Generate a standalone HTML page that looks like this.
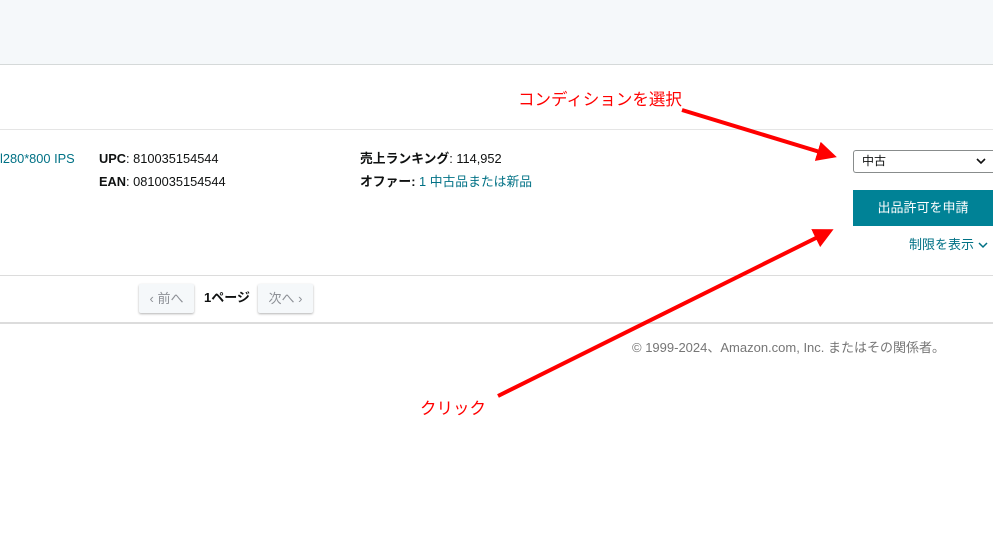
<!DOCTYPE html>
<html><head><meta charset="utf-8"><style>
body{margin:0;width:993px;height:541px;position:relative;overflow:hidden;background:#fff;font-family:"Liberation Sans","Noto Sans CJK JP",sans-serif;font-size:12.8px;color:#0f1111}
.a{position:absolute;white-space:nowrap;line-height:16px}
.top{position:absolute;left:0;top:0;width:993px;height:64px;background:#f5f8fa;border-bottom:1px solid #d5d9d9}
.line{position:absolute;left:0;width:993px;height:1px;background:#dcdcdc}
.lnk{color:#007185}
b{font-weight:700}
.pb{position:absolute;top:284px;height:29px;background:#f5f8fa;border-radius:2px;box-shadow:0 1px 2px rgba(0,0,0,.3);color:#8d9096;font-size:13px;line-height:29px;text-align:center}
.red{color:#f00;font-size:16.5px;font-family:"Noto Sans CJK JP",sans-serif;line-height:22px}
</style></head><body>
<div class="top"></div>
<div class="line" style="top:129px;background:#e5e5e5"></div>
<div class="line" style="top:275px"></div>
<div class="line" style="top:322px;height:2px"></div>
<div class="a lnk" style="left:0;top:151px">l280*800 IPS</div>
<div class="a" style="left:99px;top:151px"><b>UPC</b>: 810035154544</div>
<div class="a" style="left:99px;top:174px"><b>EAN</b>: 0810035154544</div>
<div class="a" style="left:360px;top:151px"><b>売上ランキング</b>: 114,952</div>
<div class="a" style="left:360px;top:174px"><b>オファー:</b> <span class="lnk">1 中古品または新品</span></div>
<div class="a" style="left:853px;top:150px;width:140px;height:23px;border:1px solid #888c8c;border-right:none;border-radius:3px 0 0 3px;box-sizing:border-box;font-size:12px;line-height:21px;padding-left:8px">中古<svg style="position:absolute;left:122px;top:6px" width="10" height="8" viewBox="0 0 10 8"><path d="M1 2l4 4 4-4" stroke="#111" stroke-width="1.6" fill="none"/></svg></div>
<div class="a" style="left:853px;top:190px;width:140px;height:36px;background:#008296;color:#fff;font-size:13px;line-height:36px;text-align:center">出品許可を申請</div>
<div class="a lnk" style="left:909px;top:237px;font-size:13px">制限を表示 <svg width="10" height="8" viewBox="0 0 10 8"><path d="M1 2l4 4 4-4" stroke="#007185" stroke-width="1.5" fill="none"/></svg></div>
<div class="pb" style="left:139px;width:55px">‹ 前へ</div>
<div class="a" style="left:204px;top:290px;font-weight:700;font-size:13px">1ページ</div>
<div class="pb" style="left:258px;width:55px">次へ ›</div>
<div class="a" style="left:632px;top:340px;color:#767676;font-size:13px">© 1999-2024、Amazon.com, Inc. またはその関係者。</div>
<div class="a red" style="left:518px;top:87px">コンディションを選択</div>
<div class="a red" style="left:420px;top:396px">クリック</div>
<svg class="a" style="left:0;top:0" width="993" height="541">
<defs><marker id="h" markerWidth="5" markerHeight="5" refX="4" refY="2.5" orient="auto"><path d="M0 0L5 2.5L0 5z" fill="#f00"/></marker></defs>
<line x1="682" y1="110" x2="833" y2="156" stroke="#f00" stroke-width="4" marker-end="url(#h)"/>
<line x1="498" y1="396" x2="830" y2="231" stroke="#f00" stroke-width="4" marker-end="url(#h)"/>
</svg>
</body></html>
